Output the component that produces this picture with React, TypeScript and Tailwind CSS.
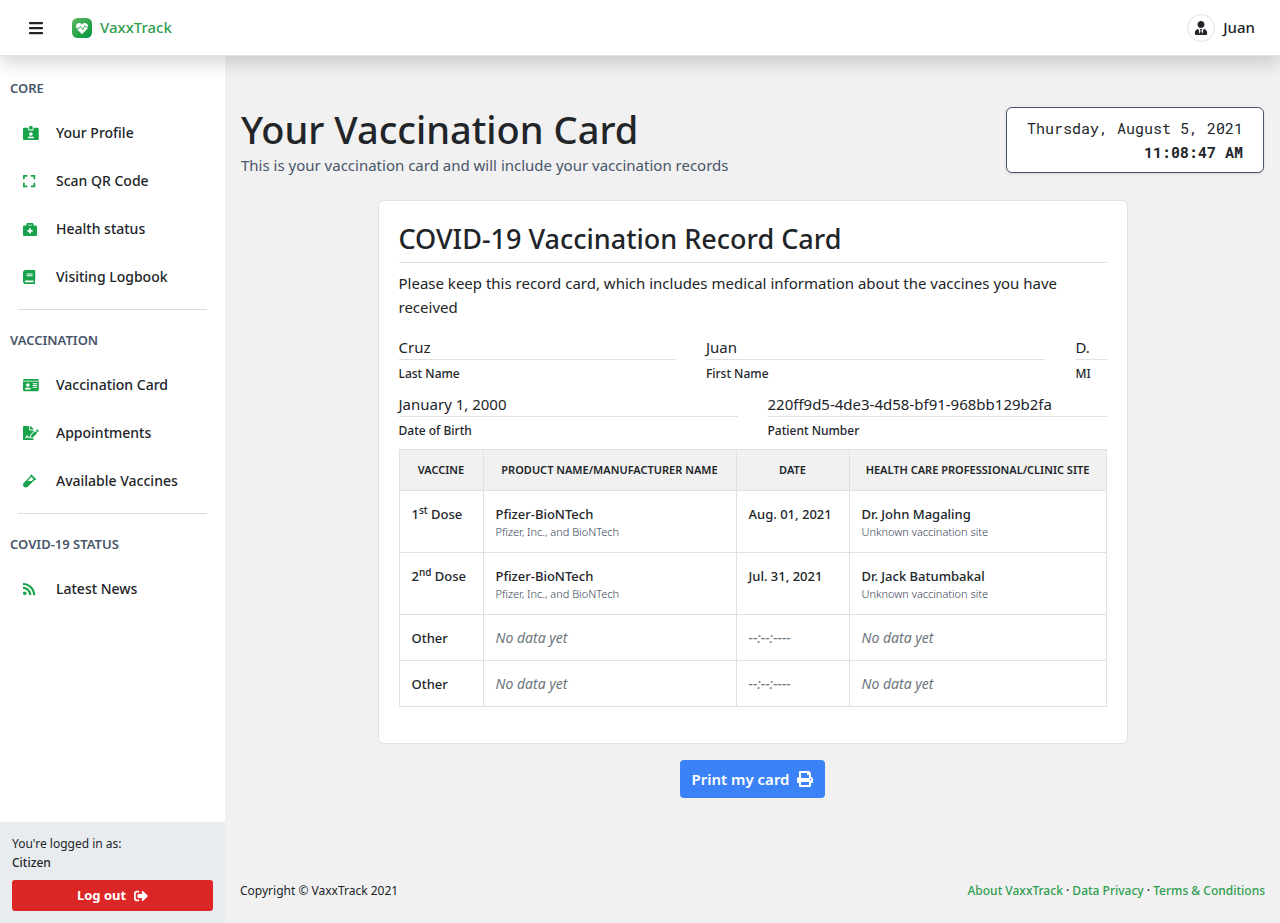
import type { ReactNode } from "react";
import type { IconType } from "react-icons";
import {
  FaBars, FaBook, FaBriefcaseMedical, FaExpand, FaFileSignature, FaIdCard, FaIdCardAlt,
  FaPrint, FaRss, FaSignOutAlt, FaUserTie, FaVial,
} from "react-icons/fa";

type NavItem = { label: string; icon: IconType };

const sections: { title: string; items: NavItem[] }[] = [
  {
    title: "CORE",
    items: [
      { label: "Your Profile", icon: FaIdCardAlt },
      { label: "Scan QR Code", icon: FaExpand },
      { label: "Health status", icon: FaBriefcaseMedical },
      { label: "Visiting Logbook", icon: FaBook },
    ],
  },
  {
    title: "VACCINATION",
    items: [
      { label: "Vaccination Card", icon: FaIdCard },
      { label: "Appointments", icon: FaFileSignature },
      { label: "Available Vaccines", icon: FaVial },
    ],
  },
  { title: "COVID-19 STATUS", items: [{ label: "Latest News", icon: FaRss }] },
];

const doses = [
  { nth: "1", suffix: "st", date: "Aug. 01, 2021", doctor: "Dr. John Magaling" },
  { nth: "2", suffix: "nd", date: "Jul. 31, 2021", doctor: "Dr. Jack Batumbakal" },
];

function Logo() {
  return (
    <svg viewBox="0 0 20 20" className="size-5" aria-hidden="true">
      <defs>
        <linearGradient id="leaf" x1="0" y1="0" x2="1" y2="1">
          <stop offset="0" stopColor="#5cb85c" />
          <stop offset="1" stopColor="#00963f" />
        </linearGradient>
      </defs>
      <rect width="20" height="20" rx="5.5" fill="url(#leaf)" />
      <path d="M10 16.2 4.9 11C3.4 9.400 3.600 6.900 5.200 5.700 6.800 4.500 8.900 4.900 10 6.500c1.100-1.600 3.200-2 4.800-.8 1.600 1.200 1.800 3.700.3 5.300z" fill="#fff" />
      <path d="M4 10.300h3l1.500-1.900 2.300 3.200 2.300-3.800 1.200 1.300h2" fill="none" stroke="#2ba04a" strokeWidth="0.9" />
    </svg>
  );
}

function Field({ label, value, className }: { label: string; value: string; className: string }) {
  return (
    <div className={className}>
      <dd className="border-b border-[#dee2e6] leading-6">{value}</dd>
      <dt className="pt-1 text-xs leading-5 font-medium">{label}</dt>
    </div>
  );
}

function Cell({ children }: { children: ReactNode }) {
  return <td className="border border-[#dee2e6] px-3 pt-[13px] pb-3 align-top">{children}</td>;
}

function Empty({ children }: { children: ReactNode }) {
  return <em className="text-sm leading-5 font-normal text-[#6c757d]">{children}</em>;
}

export default function App() {
  return (
    <div className="flex min-h-screen flex-col bg-[#f1f1f1] font-['Noto_Sans',sans-serif] text-[15px] text-[#212529]">
      <header className="relative z-10 flex h-14 items-center justify-between border-b border-[#dee2e6] bg-white pr-[25px] pl-7 shadow-[0_8px_16px_rgba(0,0,0,0.15)]">
        <div className="flex items-center gap-7">
          <button type="button" aria-label="Toggle navigation" className="text-base"><FaBars /></button>
          <a href="#home" className="flex items-center gap-2 font-medium text-[#2e9e4f]">
            <Logo />
            VaxxTrack
          </a>
        </div>
        <a href="#account" className="flex items-center gap-2 font-medium">
          <span className="flex size-7 items-center justify-center rounded-full border border-[#dee2e6]"><FaUserTie className="size-[14px]" /></span>
          Juan
        </a>
      </header>

      <div className="flex flex-1">
        <aside className="flex w-[225px] shrink-0 flex-col bg-white">
          <nav className="flex-1" aria-label="Main">
            {sections.map((section, index) => (
              <section key={section.title}>
                {index > 0 && <hr className="mx-[18px] mt-2 border-[#dcdcdc]" />}
                <h2 className={`px-[10px] text-[13px] leading-5 font-semibold text-[#475569] ${index > 0 ? "pt-5" : "pt-[22px]"}`}>{section.title}</h2>
                <ul className="pt-[11px]">
                  {section.items.map(({ label, icon: Icon }) => (
                    <li key={label}>
                      <a href={"#" + label.toLowerCase().replaceAll(" ", "-")} className="flex h-12 items-center pl-[23px] text-sm font-medium">
                        <span className="w-[33px] text-[#16a34a]"><Icon className="h-[14px] w-4" preserveAspectRatio="xMinYMid meet" /></span>
                        {label}
                      </a>
                    </li>
                  ))}
                </ul>
              </section>
            ))}
          </nav>
          <div className="bg-[#e9ecef] p-3 text-xs">
            <p className="leading-5">You're logged in as:</p>
            <p className="leading-[18px] font-medium">Citizen</p>
            <button type="button" className="mt-2 flex h-[31px] w-full items-center justify-center gap-2 rounded-[3px] bg-[#dc2626] text-[13px] font-bold text-white">
              Log out
              <FaSignOutAlt className="text-sm" />
            </button>
          </div>
        </aside>

        <div className="flex min-w-0 flex-1 flex-col">
          <main className="flex-1 px-4 pt-[51px]">
            <div className="flex items-start justify-between">
              <div>
                <h1 className="text-[38px] leading-11 font-medium">Your Vaccination Card</h1>
                <p className="mt-1 leading-5 text-[#475569]">This is your vaccination card and will include your vaccination records</p>
              </div>
              <div className="rounded-md border border-[#475569] bg-white px-5 py-2 text-right font-['Roboto_Mono','Liberation_Mono',monospace] text-[15px] leading-6 shadow-sm">
                <p>Thursday, August 5, 2021</p>
                <p className="font-bold">11:08:47 AM</p>
              </div>
            </div>

            <article className="mx-auto mt-[25px] max-w-[750px] rounded-md border border-[#dee2e6] bg-white px-5 pt-5 pb-9">
              <h2 className="border-b border-[#dee2e6] pb-1.5 text-[27px] leading-[35px] font-medium">COVID-19 Vaccination Record Card</h2>
              <p className="pt-2 leading-6">Please keep this record card, which includes medical information about the vaccines you have received</p>
              <dl className="flex flex-col gap-2 pt-4">
                <div className="flex gap-[30px]">
                  <Field label="Last Name" value="Cruz" className="flex-[277]" />
                  <Field label="First Name" value="Juan" className="flex-[339]" />
                  <Field label="MI" value="D." className="flex-[31]" />
                </div>
                <div className="flex gap-[30px]">
                  <Field label="Date of Birth" value="January 1, 2000" className="flex-1" />
                  <Field label="Patient Number" value="220ff9d5-4de3-4d58-bf91-968bb129b2fa" className="flex-1" />
                </div>
              </dl>
              <table className="mt-2 w-full table-fixed border-collapse text-[13px] leading-5">
                <colgroup>
                  <col className="w-[84px]" />
                  <col className="w-[253px]" />
                  <col className="w-[113px]" />
                  <col />
                </colgroup>
                <thead className="bg-[#f1f1f1] text-[11px] leading-6">
                  <tr>
                    {["VACCINE", "PRODUCT NAME/MANUFACTURER NAME", "DATE", "HEALTH CARE PROFESSIONAL/CLINIC SITE"].map((title) => (
                      <th key={title} scope="col" className="border border-[#dee2e6] py-2 font-semibold">{title}</th>
                    ))}
                  </tr>
                </thead>
                <tbody className="font-medium">
                  {doses.map((dose) => (
                    <tr key={dose.nth} className="h-[62px]">
                      <Cell>{dose.nth}<sup className="text-[10px]">{dose.suffix}</sup> Dose</Cell>
                      <Cell>
                        <p>Pfizer-BioNTech</p>
                        <p className="text-[11px] leading-4 font-light text-[#334155]">Pfizer, Inc., and BioNTech</p>
                      </Cell>
                      <Cell>{dose.date}</Cell>
                      <Cell>
                        <p>{dose.doctor}</p>
                        <p className="text-[11px] leading-4 font-light text-[#334155]">Unknown vaccination site</p>
                      </Cell>
                    </tr>
                  ))}
                  {[0, 1].map((row) => (
                    <tr key={row} className="h-[46px]">
                      <Cell>Other</Cell>
                      <Cell><Empty>No data yet</Empty></Cell>
                      <Cell><Empty>--:--:----</Empty></Cell>
                      <Cell><Empty>No data yet</Empty></Cell>
                    </tr>
                  ))}
                </tbody>
              </table>
            </article>

            <button type="button" className="mx-auto mt-4 flex h-[38px] items-center gap-2 rounded-[4px] bg-[#3b82f6] px-3 font-semibold text-white">
              Print my card
              <FaPrint className="text-base" />
            </button>
          </main>
          <footer className="flex items-center justify-between px-[15px] pt-6 pb-[22px] text-xs leading-5">
            <p>Copyright © VaxxTrack 2021</p>
            <p className="font-medium">
              <a href="#about" className="text-[#2e9e4f]">About VaxxTrack</a> ·{" "}
              <a href="#privacy" className="text-[#2e9e4f]">Data Privacy</a> ·{" "}
              <a href="#terms" className="text-[#2e9e4f]">Terms &amp; Conditions</a>
            </p>
          </footer>
        </div>
      </div>
    </div>
  );
}
